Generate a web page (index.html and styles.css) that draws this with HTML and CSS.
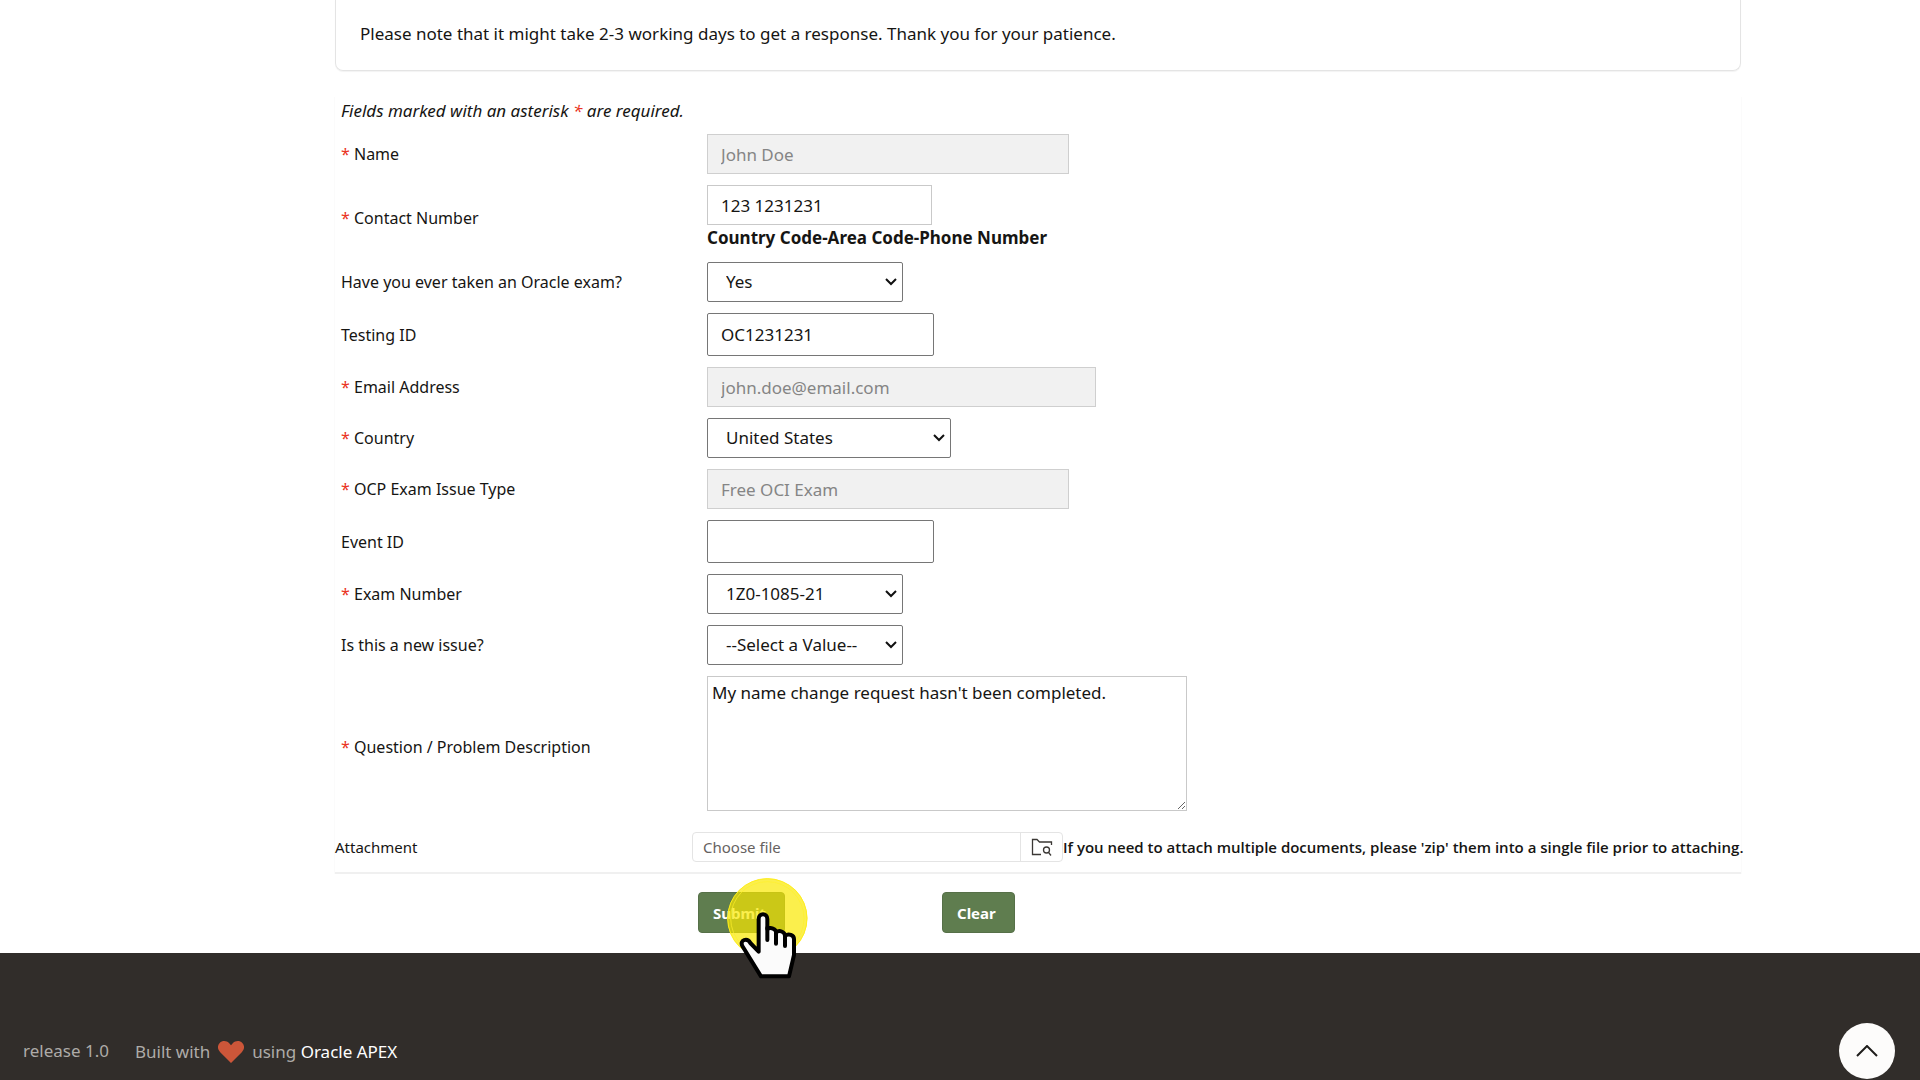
FILE: index.html
```html
<!DOCTYPE html>
<html lang="en">
<head>
<meta charset="utf-8">
<meta name="viewport" content="width=device-width, initial-scale=1">
<title>Certification Support Request</title>
<link rel="stylesheet" href="styles.css">
</head>
<body>
<main class="page">
  <section class="notice">
    <p>Please note that it might take 2-3 working days to get a response. Thank you for your patience.</p>
  </section>

  <form class="request">
    <div class="region">
      <div class="fields">
        <p class="legend">Fields marked with an asterisk <span class="star">*</span> are required.</p>

        <label for="name"><span class="star">*</span> Name</label>
        <input class="control locked w-medium" id="name" type="text" value="John Doe" disabled>

        <label for="phone"><span class="star">*</span> Contact Number</label>
        <div class="stack">
          <input class="control soft w-phone" id="phone" type="text" value="123 1231231">
          <strong class="hint">Country Code-Area Code-Phone Number</strong>
        </div>

        <label for="taken">Have you ever taken an Oracle exam?</label>
        <div class="select w-small">
          <select class="control" id="taken"><option>Yes</option><option>No</option></select>
          <svg class="chevron" width="14" height="8" viewBox="0 0 14 8" aria-hidden="true"><path d="M2 1L7 6L12 1"/></svg>
        </div>

        <label for="testing">Testing ID</label>
        <input class="control tall w-id" id="testing" type="text" value="OC1231231">

        <label for="email"><span class="star">*</span> Email Address</label>
        <input class="control locked w-large" id="email" type="email" value="john.doe@email.com" disabled>

        <label for="country"><span class="star">*</span> Country</label>
        <div class="select w-country">
          <select class="control" id="country"><option>United States</option></select>
          <svg class="chevron" width="14" height="8" viewBox="0 0 14 8" aria-hidden="true"><path d="M2 1L7 6L12 1"/></svg>
        </div>

        <label for="type"><span class="star">*</span> OCP Exam Issue Type</label>
        <input class="control locked w-medium" id="type" type="text" value="Free OCI Exam" disabled>

        <label for="event">Event ID</label>
        <input class="control tall w-id" id="event" type="text">

        <label for="exam"><span class="star">*</span> Exam Number</label>
        <div class="select w-small">
          <select class="control" id="exam"><option>1Z0-1085-21</option></select>
          <svg class="chevron" width="14" height="8" viewBox="0 0 14 8" aria-hidden="true"><path d="M2 1L7 6L12 1"/></svg>
        </div>

        <label for="new-issue">Is this a new issue?</label>
        <div class="select w-small">
          <select class="control" id="new-issue"><option>--Select a Value--</option><option>Yes</option><option>No</option></select>
          <svg class="chevron" width="14" height="8" viewBox="0 0 14 8" aria-hidden="true"><path d="M2 1L7 6L12 1"/></svg>
        </div>

        <label for="question"><span class="star">*</span> Question / Problem Description</label>
        <textarea class="control question" id="question">My name change request hasn't been completed.</textarea>
      </div>

      <div class="attachment">
        <label for="file">Attachment</label>
        <div class="file-box">
          <input class="file-name" id="file" type="text" placeholder="Choose file" readonly>
          <button class="browse" type="button" aria-label="Browse">
            <svg width="24" height="20" viewBox="0 0 24 20" fill="none" stroke="#3b3835" stroke-width="1.3"><path d="M11 17.500H2.500V2.500H7L9.500 5H21.500V8"/><circle cx="16.500" cy="13" r="3"/><path d="M18.500 15.300L21 18.500"/></svg>
          </button>
        </div>
        <strong class="zip-note">If you need to attach multiple documents, please 'zip' them into a single file prior to attaching.</strong>
      </div>
    </div>

    <div class="actions">
      <div class="submit-slot">
        <button class="button" type="submit">Submit</button>
        <svg class="pointer" width="84" height="103" viewBox="138 50 252 309" aria-hidden="true">
          <circle cx="262" cy="174" r="120" fill="#fae800" fill-opacity=".7"/>
          <circle cx="262" cy="174" r="119" fill="none" stroke="#ffee1c" stroke-width="3"/>
          <circle cx="262" cy="174" r="110" fill="none" stroke="#fff02a" stroke-width="2"/>
          <path d="M236 274V176C236 157 262 157 262 176V206C272 200 288 205 288 216C298 208 314 214 315 226C326 218 342 224 342 236V284L327 348H243L187 257C178 238 202 232 211 248Z" fill="#fbfbfb" stroke="#000" stroke-width="12" stroke-linejoin="round"/>
          <path d="M262 202V239M288 214V250M315 224V257" stroke="#000" stroke-width="12" stroke-linecap="round"/>
        </svg>
      </div>
      <button class="button" type="reset">Clear</button>
    </div>
  </form>
</main>

<footer class="footer">
  <span>release 1.0</span>
  <span class="built">Built with
    <svg width="26" height="22" viewBox="0 0 26 22" role="img" aria-label="love"><path fill="#cc5639" d="M13 22L2.200 11.200C-.8 8.200-.7 4.300 1.700 1.900 4.300-.7 8.500-.5 11 2L13 4.200 15 2C17.500-.5 21.700-.7 24.300 1.900 26.700 4.300 26.800 8.200 23.800 11.200Z"/></svg>
    <span>using <a href="#apex">Oracle APEX</a></span></span>
</footer>
<button class="to-top" type="button" aria-label="Back to top">
  <svg width="22" height="12" viewBox="0 0 22 12" fill="none" stroke="#1f1d1b" stroke-width="2"><path d="M1 11L11 1L21 11"/></svg>
</button>
</body>
</html>
```
FILE: styles.css
```css
* {
  box-sizing: border-box;
}

body {
  margin: 0;
  min-height: 100vh;
  display: flex;
  flex-direction: column;
  background: #fff;
  color: #161513;
  font: 17px/24px "Noto Sans", "Open Sans", sans-serif;
}

p {
  margin: 0;
}

input,
select,
textarea,
button {
  font: inherit;
  color: inherit;
}

.page {
  display: grid;
  grid-template-columns: 335fr minmax(0, 1406fr) 179fr;
}

.page > * {
  grid-column: 2;
}

.notice {
  padding: 22px 24px 24px;
  border: 1px solid #e4e4e4;
  border-top: 0;
  border-radius: 0 0 8px 8px;
  box-shadow: 0 1px 1px #f3f3f3;
}

.region {
  margin-top: 26px;
  padding: 1px 0 10px;
  border-bottom: 2px solid #f0f0f0;
  box-shadow: -1px 0 #fbfbfb, 1px 0 #fbfbfb;
}

.fields {
  display: grid;
  grid-template-columns: 366px minmax(0, 1fr);
  gap: 11px 0;
  align-items: center;
  padding: 0 6px;
}

.legend {
  grid-column: 1 / -1;
  font-style: italic;
  line-height: 25px;
}

label {
  font-size: 16px;
}

.star {
  color: #ea3323;
}

.stack {
  display: grid;
}

.control {
  height: 40px;
  max-width: 100%;
  padding: 0 13px;
  border: 1px solid #767676;
  border-radius: 2px;
  background: #fff;
}

.select {
  display: grid;
  align-items: center;
  max-width: 100%;
}

.select > * {
  grid-area: 1 / 1;
}

.select .control {
  appearance: none;
  width: 100%;
  padding: 0 24px 0 18px;
}

.chevron {
  justify-self: end;
  margin-right: 5px;
  fill: none;
  stroke: #111;
  stroke-width: 2;
  pointer-events: none;
}

.control.soft {
  border-color: #c9c9c9;
  border-radius: 0;
}

.control.locked {
  border-color: #cfcfcf;
  border-radius: 0;
  background: #f1f1f1;
  color: #858585;
}

.tall {
  height: 43px;
}

.w-small {
  width: 196px;
}

.w-phone {
  width: 225px;
}

.w-id {
  width: 227px;
}

.w-country {
  width: 244px;
}

.w-medium {
  width: 362px;
}

.w-large {
  width: 389px;
}

.hint {
  line-height: 26px;
}

.question {
  width: 480px;
  height: 135px;
  margin-bottom: 7px;
  padding: 4px;
  border-color: #c9c9c9;
  border-radius: 0;
}

.attachment {
  display: flex;
  align-items: center;
  margin-top: 14px;
  font-size: 15px;
}

.attachment label {
  flex: 0 0 357px;
  font-size: 15px;
}

.file-box {
  display: flex;
  flex: 0 0 371px;
  height: 30px;
  border: 1px solid #e4e4e4;
  border-radius: 4px;
}

.file-name {
  flex: 1;
  min-width: 0;
  padding: 0 10px;
  border: 0;
  background: none;
}

.file-name::placeholder {
  color: #66625f;
}

.browse {
  display: grid;
  place-items: center;
  width: 42px;
  padding: 0;
  border: 0;
  border-left: 1px solid #e4e4e4;
  background: none;
}

.zip-note {
  font: 600 15px/24px "Open Sans", "Noto Sans", sans-serif;
  white-space: nowrap;
}

.actions {
  display: flex;
  padding: 18px 0 20px 363px;
}

.submit-slot {
  position: relative;
  flex: 0 0 244px;
}

.button {
  height: 41px;
  padding: 0 18px 0 14px;
  border: 1px solid #567048;
  border-radius: 4px;
  background: #5f7d4f;
  color: #fff;
  font-size: 15px;
  font-weight: 700;
}

.pointer {
  position: absolute;
  left: 28px;
  top: -15px;
}

.footer {
  flex: 1;
  display: flex;
  gap: 26px;
  padding: 86px 23px 16px;
  background: #312d2a;
  color: #aeaba8;
}

.built {
  display: flex;
  align-items: center;
  gap: 8px;
}

.footer a {
  color: #fff;
  text-decoration: none;
}

.to-top {
  position: fixed;
  right: 25px;
  bottom: 1px;
  display: grid;
  place-items: center;
  width: 56px;
  height: 56px;
  padding: 0;
  border: 0;
  border-radius: 50%;
  background: #fdfcfb;
}

@media (max-width: 1500px) {
  .page {
    grid-template-columns: 24px minmax(0, 1fr) 24px;
  }

  .attachment {
    flex-wrap: wrap;
  }

  .zip-note {
    white-space: normal;
  }
}
```
